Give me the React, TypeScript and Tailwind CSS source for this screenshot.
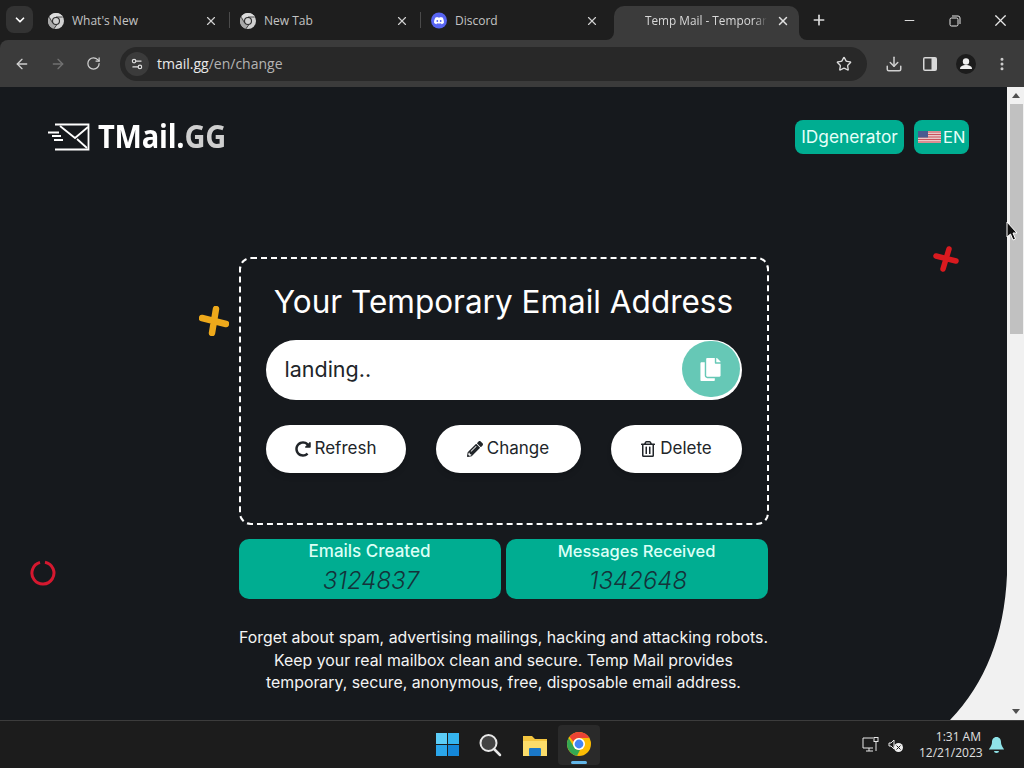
import React from 'react';
import { ArrowLeft, ArrowRight, ChevronDown, Download, EllipsisVertical, Minus, Plus, RotateCw, Settings2, Star, X } from 'lucide-react';
import { FaCopy, FaPencilAlt, FaRedoAlt, FaRegTrashAlt } from 'react-icons/fa';

const ChromeLogo = ({ size = 16, gray = false }: { size?: number; gray?: boolean }) => (
  <svg width={size} height={size} viewBox="0 0 24 24">
    <circle cx="12" cy="12" r="12" fill={gray ? '#d0d0d0' : '#fbbc04'} />
    <path d="M12 0a12 12 0 0 1 10.400 6H12a6 6 0 0 0-5.600 3.800L2.600 4.800A12 12 0 0 1 12 0z" fill={gray ? '#dcdcdc' : '#ea4335'} />
    <path d="M1.600 6 7 15a6 6 0 0 0 6 3l-3 5.800A12 12 0 0 1 1.600 6z" fill={gray ? '#a8a8a8' : '#34a853'} />
    <circle cx="12" cy="12" r="6" fill={gray ? '#2a2a2a' : '#fff'} />
    <circle cx="12" cy="12" r="4.400" fill={gray ? '#d0d0d0' : '#4285f4'} />
    {gray && <path d="M12 6h10M7 15 2 6.500M13 18l-4.500 6" stroke="#2a2a2a" strokeWidth="1.200" />}
  </svg>
);

const DiscordLogo = () => (
  <svg width="17" height="17" viewBox="0 0 24 24">
    <circle cx="12" cy="12" r="12" fill="#5865f2" />
    <path d="M17.200 7.600a12 12 0 0 0-3-.9l-.4.8a11 11 0 0 0-3.600 0l-.4-.8a12 12 0 0 0-3 .9C4.900 10.400 4.400 13.100 4.700 15.800a12 12 0 0 0 3.600 1.800l.8-1.200-1.200-.6.300-.2a8.600 8.600 0 0 0 7.600 0l.3.200-1.200.6.8 1.200a12 12 0 0 0 3.600-1.800c.4-3.100-.5-5.800-1.800-8.200zM9.500 14.200c-.7 0-1.300-.7-1.300-1.500s.6-1.500 1.300-1.500 1.300.7 1.300 1.500-.6 1.500-1.300 1.500zm5 0c-.7 0-1.300-.7-1.300-1.500s.6-1.500 1.300-1.500 1.300.7 1.300 1.500-.6 1.500-1.300 1.500z" fill="#fff" />
  </svg>
);

const Tab = ({ icon, title, width }: { icon: React.ReactNode; title: string; width: string }) => (
  <div className={`flex items-center h-[34px] pb-[5px] pl-[10px] pr-[11px] ${width}`}>
    <div className="w-[16px] flex justify-center shrink-0">{icon}</div>
    <span className="ml-2 flex-1 text-[12px] text-[#c4c4c4]">{title}</span>
    <X size={14} strokeWidth={2} className="text-[#d0d0d0]" />
  </div>
);

const TabStrip = () => (
  <div className="h-[40px] bg-[#1e1e1e] flex items-end shrink-0">
    <div className="self-start mt-[6px] ml-[6px] w-[27px] h-[27px] rounded-lg bg-[#333333] flex items-center justify-center">
      <ChevronDown size={14} strokeWidth={3} className="text-white" />
    </div>
    <div className="ml-[5px] flex items-center h-[34px]">
      <Tab icon={<ChromeLogo gray />} title="What's New" width="w-[191px]" />
      <div className="w-px h-[16px] mb-[6px] bg-[#4a4a4a]" />
      <Tab icon={<ChromeLogo gray />} title="New Tab" width="w-[190px]" />
      <div className="w-px h-[16px] mb-[6px] bg-[#4a4a4a]" />
      <Tab icon={<DiscordLogo />} title="Discord" width="w-[189px]" />
    </div>
    <div className="relative ml-[4px] w-[185px] h-[34px] bg-[#3b3b3b] rounded-t-[10px] flex items-center pb-[5px] pl-[31px] pr-[9px]">
      <svg className="absolute left-[-8px] bottom-0" width="8" height="8" viewBox="0 0 8 8">
        <path d="M8 0v8H0a8 8 0 0 0 8-8z" fill="#3b3b3b" />
      </svg>
      <span className="w-[122px] overflow-hidden whitespace-nowrap text-[11.800px] text-[#d8d8d8] [mask-image:linear-gradient(to_right,black_90%,transparent)]">Temp Mail - Temporary</span>
      <X size={14} strokeWidth={2.500} className="ml-auto text-[#e0e0e0]" />
      <svg className="absolute right-[-8px] bottom-0" width="8" height="8" viewBox="0 0 8 8">
        <path d="M0 0v8h8a8 8 0 0 1-8-8z" fill="#3b3b3b" />
      </svg>
    </div>
    <Plus size={16} strokeWidth={2.500} className="self-center ml-[12px] text-[#dcdcdc]" />
    <div className="ml-auto self-start mt-[11px] flex items-center text-[#e8e8e8]">
      <Minus size={15} strokeWidth={1.500} className="mr-[32px]" />
      <svg width="12" height="12" viewBox="0 0 12 12" fill="none" stroke="currentColor" className="mr-[30px]">
        <rect x="1" y="3" width="8" height="8" rx="1.500" />
        <path d="M3 1h6a2 2 0 0 1 2 2v6" />
      </svg>
      <X size={19} strokeWidth={1.500} className="mr-[14px]" />
    </div>
  </div>
);

const Toolbar = () => (
  <div className="h-[47px] bg-[#3b3b3b] flex items-center shrink-0 rounded-tl-lg">
    <div className="flex items-center w-[120px] pl-[14px] gap-[20px]">
      <ArrowLeft size={16} strokeWidth={2} className="text-[#d0d0d0]" />
      <ArrowRight size={16} strokeWidth={2} className="text-[#727272]" />
      <RotateCw size={15} strokeWidth={2} className="text-[#d0d0d0]" />
    </div>
    <div className="w-[747px] h-[34px] rounded-full bg-[#282828] flex items-center pl-[5px] pr-[15px]">
      <div className="w-[24px] h-[24px] rounded-full bg-[#3b3b3b] flex items-center justify-center">
        <Settings2 size={14} strokeWidth={2} className="text-[#e0e0e0]" />
      </div>
      <span className="ml-[8px] text-[14px] text-[#e8e8e8]">tmail.gg<span className="text-[#b4b4b4]">/en/change</span></span>
      <Star size={16} strokeWidth={2} className="ml-auto text-[#dcdcdc]" />
    </div>
    <div className="flex items-center ml-[18px] text-[#d0d0d0]">
      <Download size={18} strokeWidth={2} />
      <svg className="ml-[20px]" width="14" height="14" viewBox="0 0 14 14">
        <rect x="0" y="0" width="14" height="14" rx="2" fill="#d8d8d8" />
        <rect x="1.500" y="1.500" width="7" height="11" fill="#3b3b3b" />
      </svg>
      <svg className="ml-[19px]" width="20" height="20" viewBox="0 0 20 20">
        <circle cx="10" cy="10" r="10" fill="#1c1c1c" />
        <circle cx="10" cy="7.500" r="3.200" fill="#f0f0f0" />
        <path d="M4 15c0-3 3-4 6-4s6 1 6 4z" fill="#f0f0f0" />
      </svg>
      <EllipsisVertical size={16} strokeWidth={2.500} className="ml-[18px]" />
    </div>
  </div>
);

const ActionButton = ({ icon, label, width }: { icon: React.ReactNode; label: string; width: string }) => (
  <button className={`h-[48px] rounded-full bg-white text-[#212529] text-[17px] flex items-center justify-center gap-[4px] shadow-md ${width}`}>
    {icon}
    {label}
  </button>
);

const StatCard = ({ title, count, titleSize }: { title: string; count: string; titleSize: string }) => (
  <div className="w-[262px] h-[60px] rounded-[10px] bg-[#00ad91] flex flex-col items-center pt-[2px]">
    <div className={`leading-[20px] font-medium text-[#dcfff6] ${titleSize}`}>{title}</div>
    <div className="mt-[2px] ml-[3px] text-[24px] leading-[36px] font-light italic text-[#14333a]">{count}</div>
  </div>
);

const Decorations = () => (
  <>
    <svg className="absolute left-[199px] top-[219px]" width="30" height="30" viewBox="0 0 30 30">
      <path d="M3 12 27 18M17 3 13 27" stroke="#eea91b" strokeWidth="6.500" strokeLinecap="round" />
    </svg>
    <svg className="absolute left-[933px] top-[159px]" width="26" height="26" viewBox="0 0 26 26">
      <path d="M3 10 23 15M16 3 10 23" stroke="#d91a1f" strokeWidth="5.500" strokeLinecap="round" />
    </svg>
    <svg className="absolute left-[29px] top-[472px]" width="28" height="28" viewBox="0 0 28 28">
      <path d="M16 3.200A11 11 0 1 1 11 3.400" fill="none" stroke="#d5182f" strokeWidth="3" />
    </svg>
    <svg className="absolute right-0 bottom-0" width="57" height="145" viewBox="950 575 57 145">
      <path d="M1007 575Q1003 665 950 720L1007 720Z" fill="#f1f1f1" />
    </svg>
  </>
);

const Scrollbar = () => (
  <div className="w-[17px] bg-[#f1f1f1] flex flex-col items-center shrink-0">
    <div className="h-[17px] flex items-center justify-center">
      <div className="w-0 h-0 border-x-[4px] border-x-transparent border-b-[5px] border-b-[#505050]" />
    </div>
    <div className="w-[13px] ml-px h-[230px] bg-[#c1c1c1]" />
    <div className="mt-auto h-[17px] flex items-center justify-center">
      <div className="w-0 h-0 border-x-[4px] border-x-transparent border-t-[5px] border-t-[#505050]" />
    </div>
  </div>
);

const Page = () => (
  <div className="flex-1 relative overflow-hidden bg-[#16191d] font-['Inter',sans-serif]">
    <Decorations />
    <header className="relative flex items-center pt-[33px] pl-[47px] pr-[38px]">
      <div className="flex items-center">
        <svg width="43" height="28" viewBox="0 0 43 28" fill="none" stroke="#fff" strokeWidth="1.800">
          <path d="M8 1.500h33.500v25H8" />
          <path d="M13 3l15 12L41 4M30 16l10 9" />
          <path d="M1 9.500h11M5 13h9M7 17h9" />
        </svg>
        <span className="ml-[8px] mt-[-2px] font-['Open_Sans',sans-serif] text-[29px] leading-[34px] font-bold text-white tracking-[-0.200px] scale-y-[1.120]">TMail.<span className="text-[#cfcfcf]">GG</span></span>
      </div>
      <button className="ml-auto h-[34px] w-[109px] rounded-lg bg-[#00ad91] text-[17.300px] text-[#e6fff9]">IDgenerator</button>
      <button className="ml-[10px] h-[34px] w-[55px] rounded-lg bg-[#00ad91] text-[16.500px] text-[#e6fff9] flex items-center pl-[4px] gap-[2px]">
        <svg width="23" height="12" viewBox="0 0 23 12">
          <rect width="23" height="12" fill="#e8c8c8" />
          <path d="M0 1h23M0 3.500h23M0 6h23M0 8.500h23M0 11h23" stroke="#c9535d" strokeWidth="1.200" />
          <rect width="10" height="6.500" fill="#4a5a90" />
        </svg>
        EN
      </button>
    </header>
    <main className="relative w-[530px] mx-auto mt-[103px]">
      <div className="h-[268px] rounded-[12px] border-2 border-dashed border-white px-[25px] pt-[21px]">
        <h1 className="text-center text-[31.500px] leading-[43px] text-white whitespace-nowrap">Your Temporary Email Address</h1>
        <div className="mt-[17px] h-[60px] rounded-full bg-white flex items-center pl-[19px] pr-px">
          <span className="mt-[-2px] text-[21.500px] text-[#212529]">landing..</span>
          <div className="ml-auto mr-[1px] mt-[-2px] w-[58px] h-[56px] rounded-full bg-[#66c8b6] flex items-center justify-center">
            <FaCopy size={23} className="text-white" />
          </div>
        </div>
        <div className="mt-[25px] flex justify-between">
          <ActionButton icon={<FaRedoAlt size={16} />} label="Refresh" width="w-[140px]" />
          <ActionButton icon={<FaPencilAlt size={16} />} label="Change" width="w-[145px]" />
          <ActionButton icon={<FaRegTrashAlt size={16} />} label="Delete" width="w-[131px]" />
        </div>
      </div>
      <div className="mt-[14px] flex gap-[5px]">
        <StatCard title="Emails Created" count="3124837" titleSize="text-[17px]" />
        <StatCard title="Messages Received" count="1342648" titleSize="text-[16.500px]" />
      </div>
      <p className="mt-[28px] text-center text-[15.850px] leading-[22.500px] text-[#f4f4f4] whitespace-nowrap">
        Forget about spam, advertising mailings, hacking and attacking robots.<br />
        Keep your real mailbox clean and secure. Temp Mail provides<br />
        temporary, secure, anonymous, free, disposable email address.
      </p>
    </main>
  </div>
);

const Taskbar = () => (
  <div className="h-[48px] bg-[#1c1c1c] border-t border-[#3c3c3c] flex items-center relative shrink-0">
    <div className="absolute left-[434px] top-0 h-full flex items-center">
      <div className="w-[26px] flex justify-center">
        <div className="grid grid-cols-2 gap-[1px] w-[23px] h-[23px]">
          <div className="bg-[#5ccdf7]" />
          <div className="bg-[#35b5f0]" />
          <div className="bg-[#2ba6ea]" />
          <div className="bg-[#1487d9]" />
        </div>
      </div>
      <svg className="ml-[18px]" width="24" height="24" viewBox="0 0 24 24" fill="none">
        <circle cx="10.500" cy="10" r="8" fill="#444" stroke="#e8e8e8" strokeWidth="2" />
        <path d="M16 16l6 6" stroke="#e8e8e8" strokeWidth="2.500" strokeLinecap="round" />
      </svg>
      <svg className="ml-[20px]" width="26" height="24" viewBox="0 0 26 24">
        <path d="M1 3h9l3 3h12v17H1z" fill="#f3c53f" />
        <rect x="1" y="8" width="24" height="15" fill="#fbdc6a" />
        <rect x="7" y="15" width="12" height="8" rx="1" fill="#1a78c8" />
      </svg>
      <div className="ml-[10px] w-[42px] h-[40px] rounded bg-[#2a2a2a] flex flex-col items-center justify-end pb-[1px]">
        <ChromeLogo size={24} />
        <div className="mt-[5px] w-[16px] h-[3px] rounded-full bg-[#62b6e8]" />
      </div>
    </div>
    <div className="ml-auto flex items-center text-[#e8e8e8]">
      <svg width="17" height="17" viewBox="0 0 17 17" fill="none" stroke="currentColor" strokeWidth="1">
        <path d="M11 12H1V2h10M4 15h7M7 12v3M14 5v10" />
        <rect x="12" y="1.500" width="4" height="4" />
      </svg>
      <svg className="ml-[9px]" width="16" height="16" viewBox="0 0 16 16">
        <path d="M1 6h2l3-3v9L3 9H1z" fill="none" stroke="#e8e8e8" />
        <circle cx="10.500" cy="10.500" r="4.500" fill="#eee" />
        <path d="M8.500 8.500l4 4m0-4-4 4" stroke="#1c1c1c" />
      </svg>
      <div className="ml-[15px] w-[62px] text-right text-[12px] leading-[16px] text-[#e0e0e0]">
        <div>1:31 AM</div>
        <div>12/21/2023</div>
      </div>
      <svg className="ml-[8px] mr-[20px]" width="15" height="16" viewBox="0 0 15 16">
        <path d="M7.500 0c3 0 4.500 2.500 4.500 5 0 4 3 6.500 3 7.500H0c0-1 3-3.500 3-7.500C3 2.500 4.500 0 7.500 0zM5 14h5a2.500 2 0 0 1-5 0z" fill="#8fe3e8" />
      </svg>
    </div>
  </div>
);

export default function App() {
  return (
    <div className="w-[1024px] h-[768px] overflow-hidden flex flex-col bg-[#1e1e1e] font-['Open_Sans',sans-serif]">
      <TabStrip />
      <Toolbar />
      <div className="relative flex-1 flex min-h-0">
        <Page />
        <Scrollbar />
        <svg className="absolute left-[1006px] top-[134px]" width="12" height="20" viewBox="0 0 12 20">
          <path d="M1 1v15l3.500-3 2.500 6 2.500-1-2.500-6H11z" fill="#111" stroke="#fff" strokeWidth="1" />
        </svg>
      </div>
      <Taskbar />
    </div>
  );
}
